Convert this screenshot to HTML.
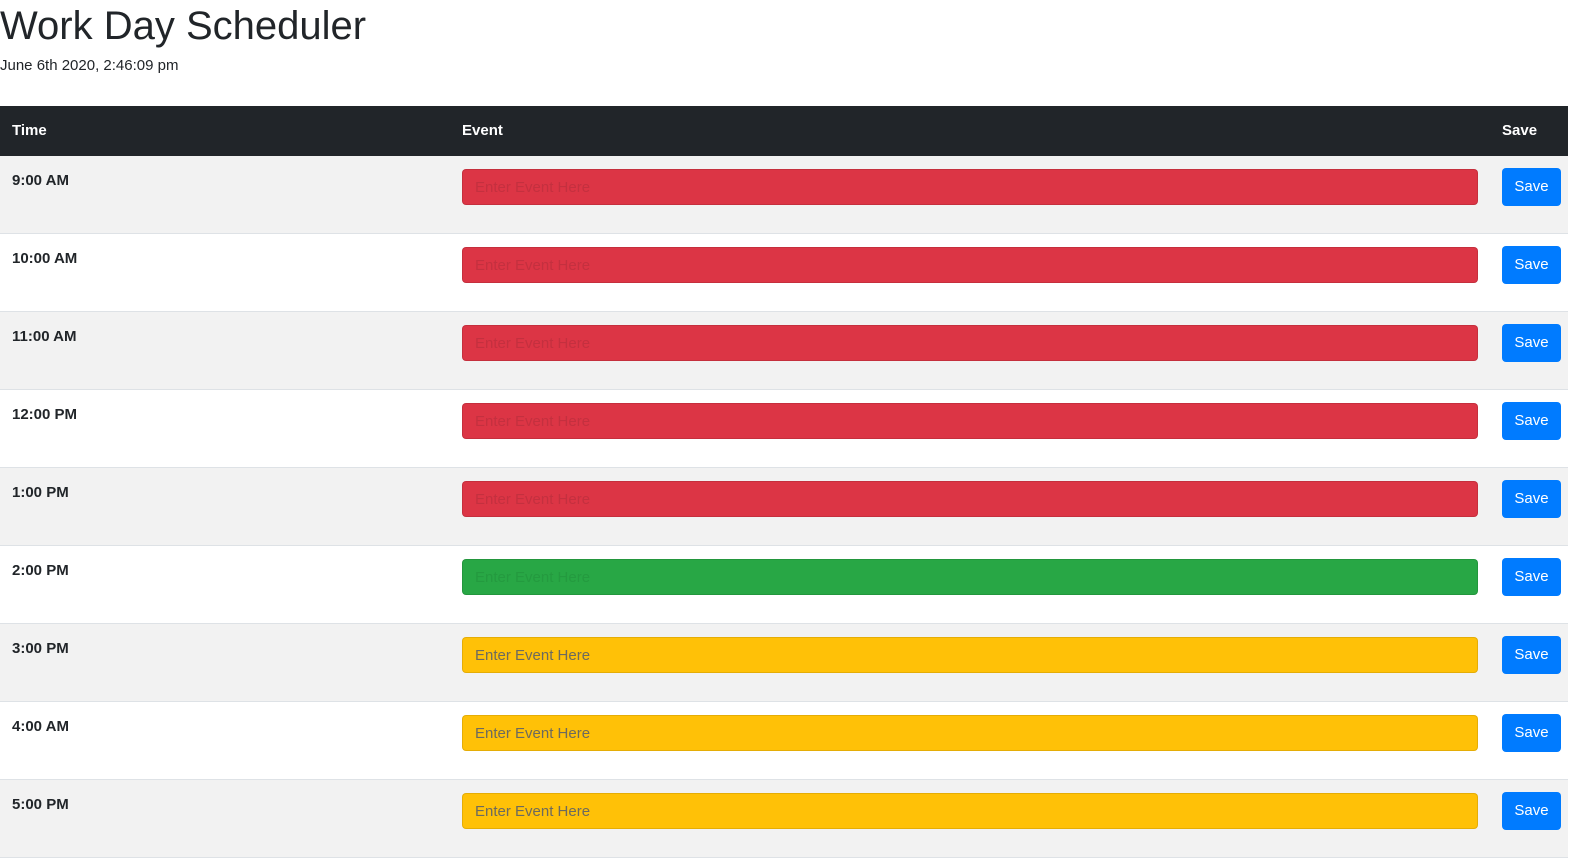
<!DOCTYPE html>
<html><head><style>
body{margin:0;background:#fff;font-family:"Liberation Sans",sans-serif;color:#212529;width:1583px;height:865px;overflow:hidden;position:relative}
h1{position:absolute;left:0;top:2px;margin:0;font-size:40px;font-weight:400;line-height:48px}
.date{position:absolute;left:0;top:57px;font-size:15px}
.hdr{position:absolute;left:0;top:106px;width:1568px;height:50px;background:#212529;color:#fff;font-weight:bold;font-size:15px}
.hdr span{position:absolute;top:16px}
.row{position:absolute;left:0;width:1568px;height:77px;border-bottom:1px solid #dee2e6}
.row:nth-child(odd){background:#f2f2f2}
.t{position:absolute;left:12px;top:16px;font-weight:bold;font-size:15px}
.in{position:absolute;left:462px;top:13px;width:1016px;height:36px;border-radius:4px;box-sizing:border-box;border:1px solid rgba(0,0,0,.1);font-size:15px;padding:9px 12px;line-height:17px}
.r{background:#dc3545;color:#c4303f}
.g{background:#28a745;color:#249a3f}
.y{background:#ffc107;color:#6c6a5f}
.b{position:absolute;left:1502px;top:12px;width:59px;height:38px;border-radius:4px;background:#007bff;color:#fff;font-size:15px;text-align:center;line-height:38px}
</style></head><body>
<h1>Work Day Scheduler</h1>
<div class="date">June 6th 2020, 2:46:09 pm</div>
<div class="hdr"><span style="left:12px">Time</span><span style="left:462px">Event</span><span style="left:1502px">Save</span></div>
<div>
<div class="row" style="top:156px"><div class="t">9:00 AM</div><div class="in r">Enter Event Here</div><div class="b">Save</div></div>
<div class="row" style="top:234px"><div class="t">10:00 AM</div><div class="in r">Enter Event Here</div><div class="b">Save</div></div>
<div class="row" style="top:312px"><div class="t">11:00 AM</div><div class="in r">Enter Event Here</div><div class="b">Save</div></div>
<div class="row" style="top:390px"><div class="t">12:00 PM</div><div class="in r">Enter Event Here</div><div class="b">Save</div></div>
<div class="row" style="top:468px"><div class="t">1:00 PM</div><div class="in r">Enter Event Here</div><div class="b">Save</div></div>
<div class="row" style="top:546px"><div class="t">2:00 PM</div><div class="in g">Enter Event Here</div><div class="b">Save</div></div>
<div class="row" style="top:624px"><div class="t">3:00 PM</div><div class="in y">Enter Event Here</div><div class="b">Save</div></div>
<div class="row" style="top:702px"><div class="t">4:00 AM</div><div class="in y">Enter Event Here</div><div class="b">Save</div></div>
<div class="row" style="top:780px"><div class="t">5:00 PM</div><div class="in y">Enter Event Here</div><div class="b">Save</div></div>
</div>
</body></html>
